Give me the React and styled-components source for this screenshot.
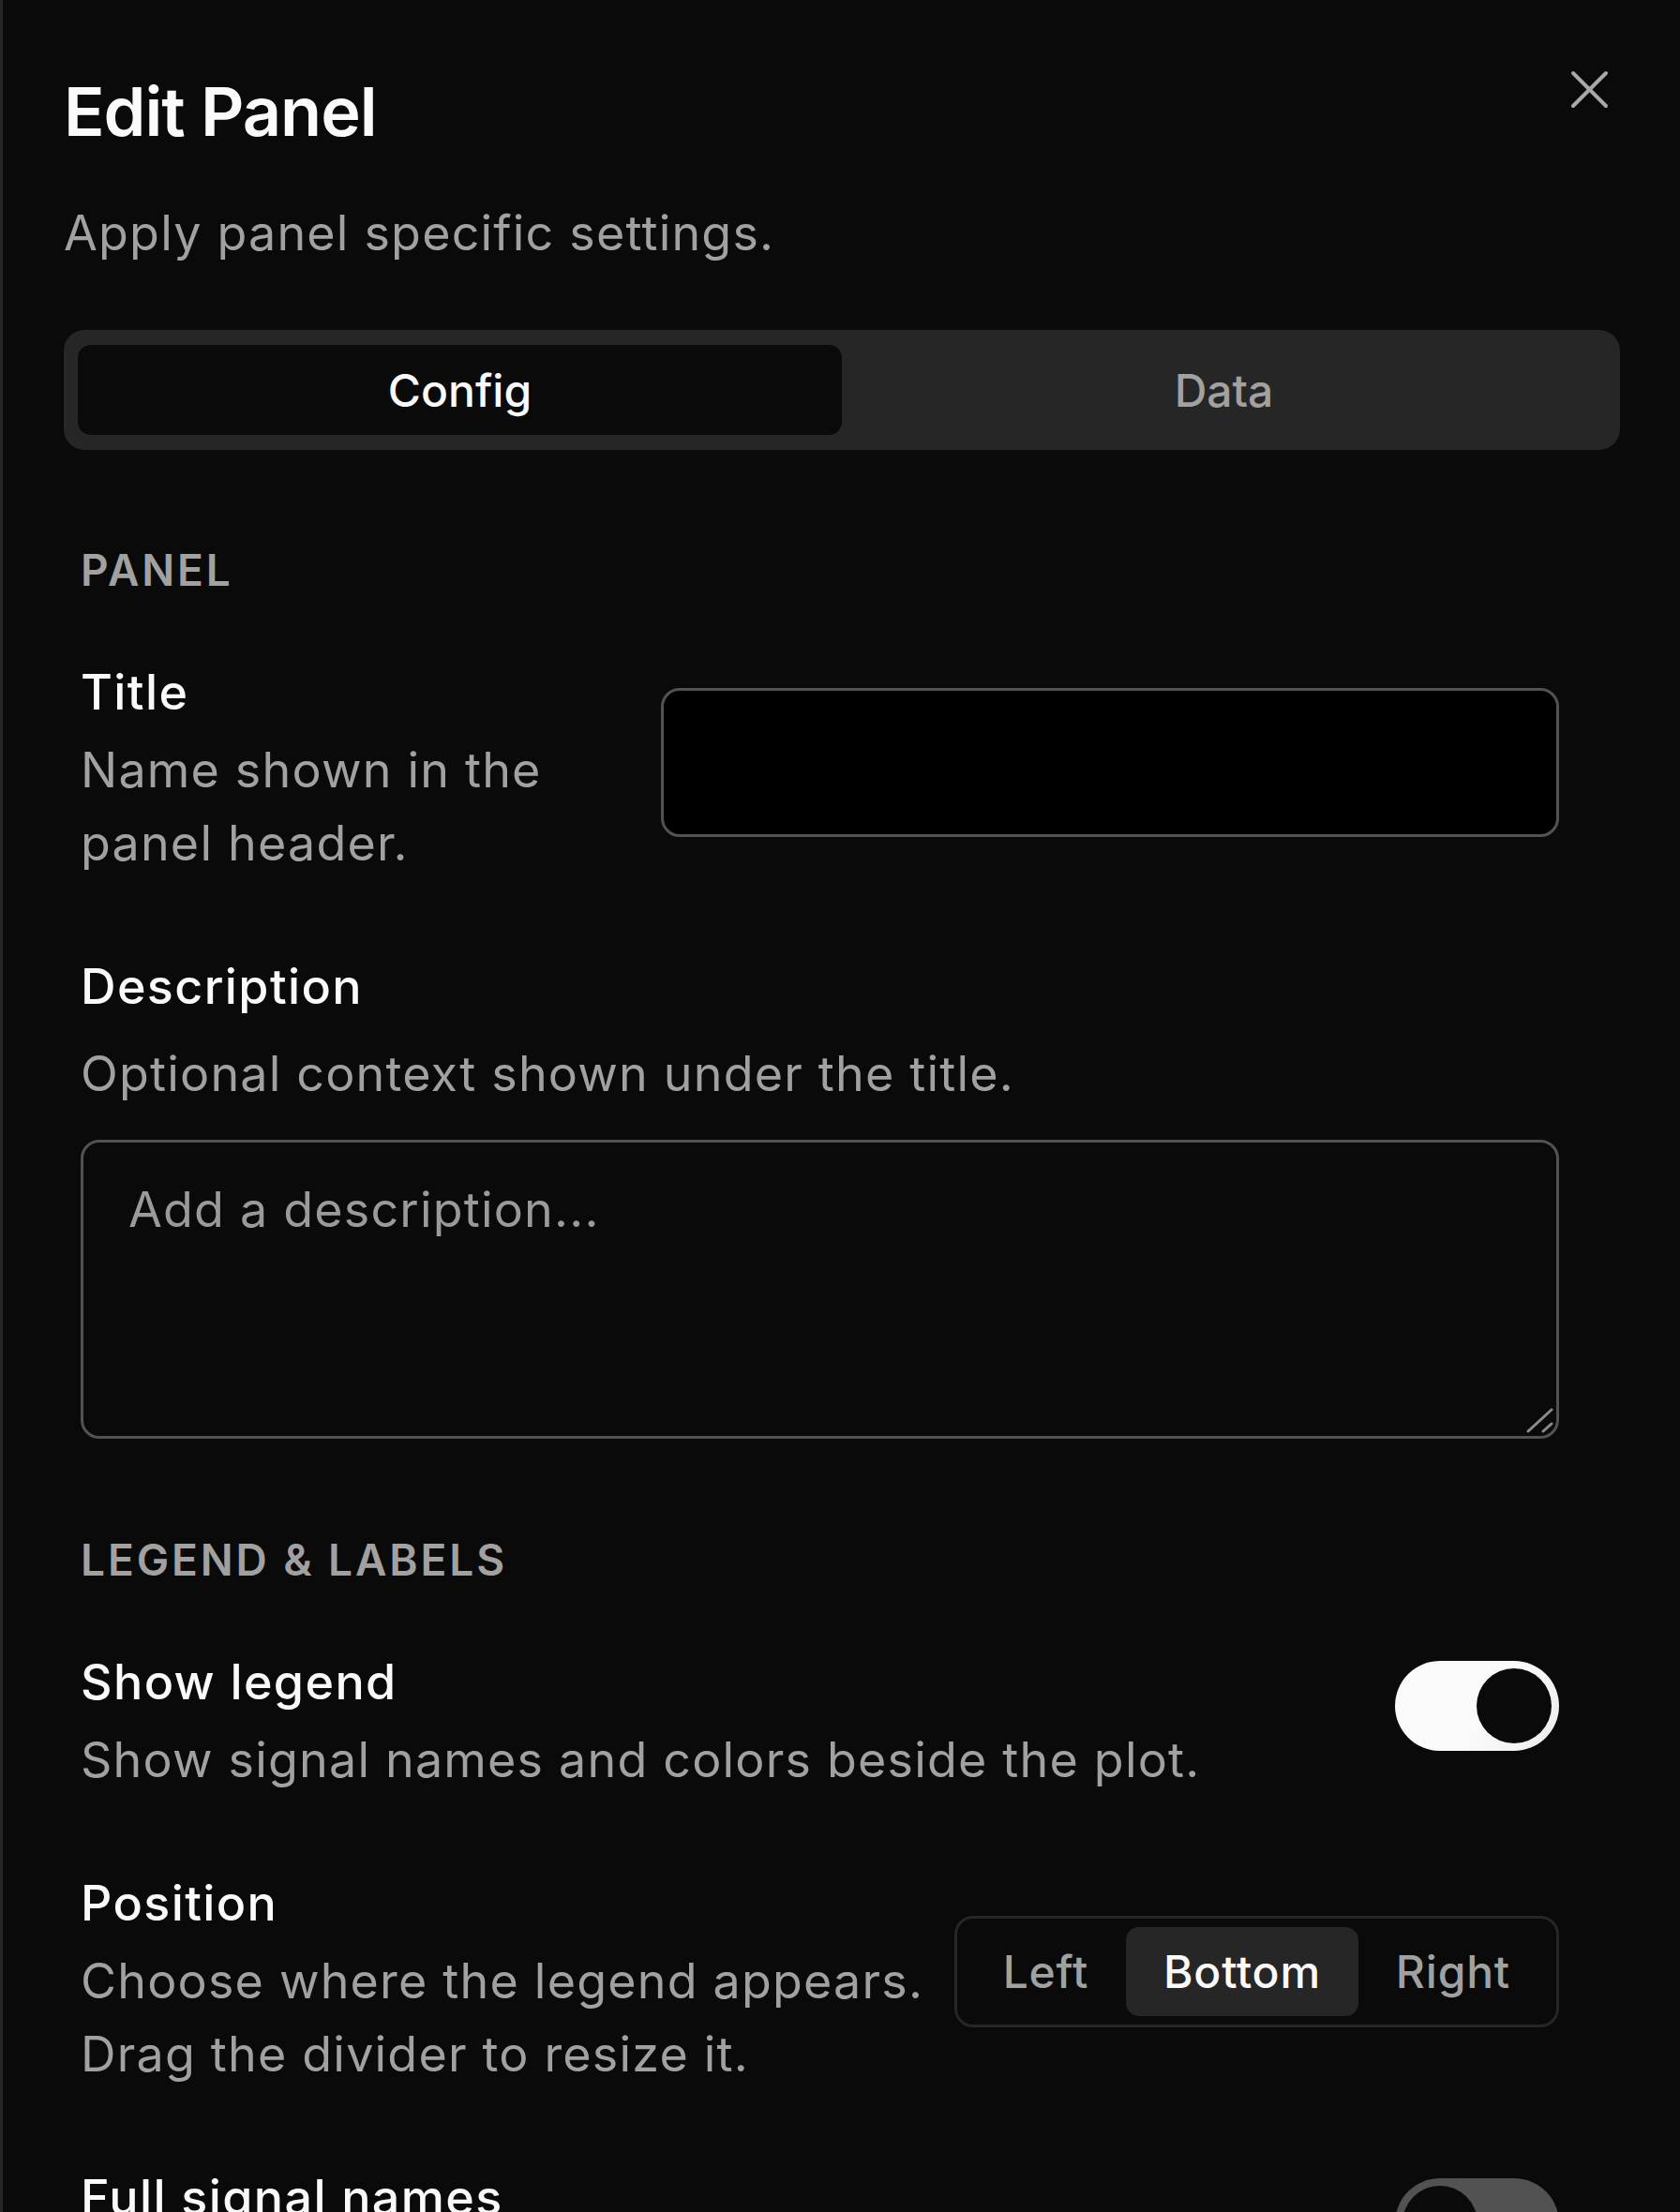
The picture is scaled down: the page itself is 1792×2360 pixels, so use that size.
import React from "react";
import styled, { createGlobalStyle } from "styled-components";

const GlobalStyle = createGlobalStyle`
  html, body {
    margin: 0;
    padding: 0;
    background: #0a0a0a;
  }
  body {
    font-family: Inter, "Noto Sans", "Liberation Sans", sans-serif;
    -webkit-font-smoothing: antialiased;
  }
  * {
    box-sizing: border-box;
  }
`;

function CloseIcon() {
  return (
    <svg width="41" height="41" viewBox="0 0 41 41" fill="none">
      <path
        d="M3 3L38 38M38 3L3 38"
        stroke="#a8a8a8"
        strokeWidth="4"
        strokeLinecap="round"
      />
    </svg>
  );
}

function ResizeGrip() {
  return (
    <Grip width="30" height="28" viewBox="0 0 30 28" fill="none">
      <path
        d="M2 26L27 3M18 26L27 18"
        stroke="#8c8c8c"
        strokeWidth="3"
        strokeLinecap="round"
      />
    </Grip>
  );
}

function Toggle({ on }) {
  return (
    <Track $on={on} role="switch" aria-checked={on} $offset={on ? 16 : 18}>
      <Thumb />
    </Track>
  );
}

function Segmented({ options, value }) {
  return (
    <SegmentGroup>
      {options.map((option) => (
        <Segment key={option} $active={option === value}>
          {option}
        </Segment>
      ))}
    </SegmentGroup>
  );
}

export default function App() {
  return (
    <>
      <GlobalStyle />
      <Sheet>
        <CloseButton aria-label="Close">
          <CloseIcon />
        </CloseButton>

        <Header>
          <Title>Edit Panel</Title>
          <Subtitle>Apply panel specific settings.</Subtitle>
        </Header>

        <Tabs>
          <Tab $active>Config</Tab>
          <Tab>Data</Tab>
        </Tabs>

        <Body>
          <Section>
            <SectionHeading>Panel</SectionHeading>
            <FieldList>
              <FieldRow>
                <FieldText>
                  <Label>Title</Label>
                  <Hint>Name shown in the panel header.</Hint>
                </FieldText>
                <TextInput type="text" $offset={34} />
              </FieldRow>

              <StackedField>
                <Label>Description</Label>
                <Hint $spaced>Optional context shown under the title.</Hint>
                <AreaWrap>
                  <TextArea placeholder="Add a description..." />
                  <ResizeGrip />
                </AreaWrap>
              </StackedField>
            </FieldList>
          </Section>

          <Section>
            <SectionHeading>Legend &amp; Labels</SectionHeading>
            <FieldList>
              <FieldRow>
                <FieldText>
                  <Label>Show legend</Label>
                  <Hint>Show signal names and colors beside the plot.</Hint>
                </FieldText>
                <Toggle on />
              </FieldRow>

              <FieldRow $gap={24}>
                <FieldText>
                  <Label>Position</Label>
                  <Hint $nowrap>
                    Choose where the legend appears.
                    <br />
                    Drag the divider to resize it.
                  </Hint>
                </FieldText>
                <ControlSlot $offset={52}>
                  <Segmented
                    options={["Left", "Bottom", "Right"]}
                    value="Bottom"
                  />
                </ControlSlot>
              </FieldRow>

              <FieldRow>
                <FieldText>
                  <Label>Full signal names</Label>
                  <Hint>Show the complete path of every signal.</Hint>
                </FieldText>
                <Toggle on={false} />
              </FieldRow>
            </FieldList>
          </Section>
        </Body>
      </Sheet>
    </>
  );
}

const Sheet = styled.div`
  position: relative;
  height: 100vh;
  overflow: hidden;
  background: #0a0a0a;
  border-left: 3px solid #262626;
  padding: 76px 64px 0 65px;
`;

const CloseButton = styled.button`
  position: absolute;
  top: 75px;
  right: 76px;
  width: 41px;
  height: 41px;
  padding: 0;
  border: none;
  background: transparent;
  display: flex;
  cursor: pointer;
`;

const Header = styled.header`
  display: flex;
  flex-direction: column;
  gap: 48px;
`;

const Title = styled.h2`
  margin: 0;
  font-size: 72px;
  line-height: 86px;
  font-weight: 600;
  letter-spacing: -1px;
  color: #fafafa;
`;

const Subtitle = styled.p`
  margin: 0;
  font-size: 52px;
  line-height: 78px;
  letter-spacing: 1.2px;
  color: #a1a1a1;
`;

const Tabs = styled.div`
  margin-top: 64px;
  height: 128px;
  padding: 16px 15px;
  border-radius: 22px;
  background: #262626;
  display: grid;
  grid-template-columns: 1fr 1fr;
`;

const Tab = styled.button`
  border: none;
  border-radius: 14px;
  font-family: inherit;
  font-size: 48px;
  font-weight: 500;
  background: ${(p) => (p.$active ? "#0a0a0a" : "transparent")};
  color: ${(p) => (p.$active ? "#fafafa" : "#a1a1a1")};
`;

const Body = styled.div`
  margin-top: 94px;
  padding: 0 65px 0 18px;
  display: flex;
  flex-direction: column;
  gap: 95px;
`;

const Section = styled.section`
  display: flex;
  flex-direction: column;
  gap: 57px;
`;

const SectionHeading = styled.h3`
  margin: 0;
  font-size: 46px;
  line-height: 69px;
  font-weight: 600;
  letter-spacing: 2.9px;
  text-transform: uppercase;
  color: #a1a1a1;
`;

const FieldList = styled.div`
  display: flex;
  flex-direction: column;
  gap: 75px;
`;

const FieldRow = styled.div`
  display: flex;
  align-items: flex-start;
  gap: ${(p) => p.$gap ?? 64}px;
`;

const FieldText = styled.div`
  flex: 1;
  min-width: 0;
  display: flex;
  flex-direction: column;
`;

const StackedField = styled.div`
  display: flex;
  flex-direction: column;
`;

const Label = styled.div`
  font-size: 52px;
  line-height: 78px;
  font-weight: 500;
  letter-spacing: 1.4px;
  color: #fafafa;
`;

const Hint = styled.div`
  margin-top: ${(p) => (p.$spaced ? 15 : 5)}px;
  font-size: 52px;
  line-height: 78px;
  letter-spacing: 1.2px;
  white-space: ${(p) => (p.$nowrap ? "nowrap" : "normal")};
  color: #a1a1a1;
`;

const TextInput = styled.input`
  flex-shrink: 0;
  width: 958px;
  height: 159px;
  margin-top: ${(p) => p.$offset}px;
  border: 3px solid #525252;
  border-radius: 20px;
  background: #000;
  color: #fafafa;
  font-family: inherit;
  font-size: 52px;
  padding: 0 48px;
  outline: none;
`;

const AreaWrap = styled.div`
  position: relative;
  margin-top: 31px;
`;

const TextArea = styled.textarea`
  display: block;
  width: 100%;
  height: 319px;
  border: 3px solid #525252;
  border-radius: 20px;
  background: #0a0a0a;
  color: #fafafa;
  font-family: inherit;
  font-size: 52px;
  line-height: 78px;
  letter-spacing: 1.2px;
  padding: 33px 48px;
  resize: none;
  outline: none;

  &::placeholder {
    color: #9a9a9a;
  }
`;

const Grip = styled.svg`
  position: absolute;
  right: 5px;
  bottom: 6px;
  pointer-events: none;
`;

const Track = styled.div`
  flex-shrink: 0;
  width: 175px;
  height: 96px;
  margin-top: ${(p) => p.$offset}px;
  padding: 8px;
  border-radius: 48px;
  display: flex;
  align-items: center;
  justify-content: ${(p) => (p.$on ? "flex-end" : "flex-start")};
  background: ${(p) =>
    p.$on ? "linear-gradient(120deg, #fafafa 55%, #ececec)" : "#525252"};
`;

const Thumb = styled.div`
  width: 80px;
  height: 80px;
  border-radius: 50%;
  background: #0a0a0a;
`;

const ControlSlot = styled.div`
  flex-shrink: 0;
  margin-top: ${(p) => p.$offset}px;
`;

const SegmentGroup = styled.div`
  display: flex;
  height: 119px;
  padding: 9px;
  border: 3px solid #262626;
  border-radius: 20px;
`;

const Segment = styled.button`
  height: 95px;
  padding: 0 40px;
  border: none;
  border-radius: 14px;
  font-family: inherit;
  font-size: 48px;
  font-weight: 500;
  letter-spacing: 0.8px;
  background: ${(p) => (p.$active ? "#262626" : "transparent")};
  color: ${(p) => (p.$active ? "#fafafa" : "#a1a1a1")};
`;
